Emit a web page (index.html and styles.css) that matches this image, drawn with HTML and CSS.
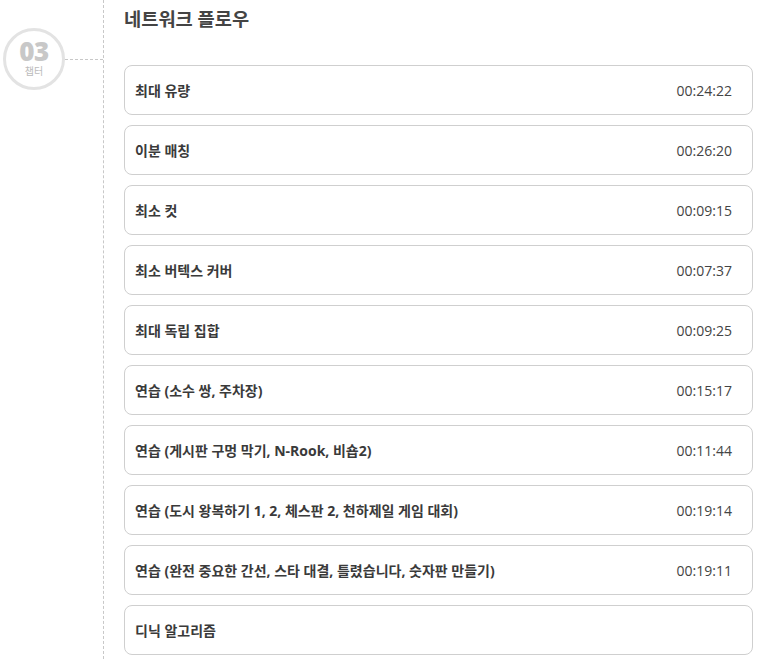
FILE: index.html
```html
<!DOCTYPE html>
<html lang="ko">
<head>
<meta charset="utf-8">
<link rel="stylesheet" href="styles.css">
</head>
<body>
<div class="page">
  <div class="side">
    <div class="badge">
      <div class="circle">
        <span class="num">03</span>
        <span class="lbl">챕터</span>
      </div>
      <div class="hline"></div>
    </div>
  </div>
  <div class="main">
    <h2 class="title">네트워크 플로우</h2>
    <ul class="list">
      <li class="item"><span class="name">최대 유량</span><span class="time">00:24:22</span></li>
      <li class="item"><span class="name">이분 매칭</span><span class="time">00:26:20</span></li>
      <li class="item"><span class="name">최소 컷</span><span class="time">00:09:15</span></li>
      <li class="item"><span class="name">최소 버텍스 커버</span><span class="time">00:07:37</span></li>
      <li class="item"><span class="name">최대 독립 집합</span><span class="time">00:09:25</span></li>
      <li class="item"><span class="name">연습 (소수 쌍, 주차장)</span><span class="time">00:15:17</span></li>
      <li class="item"><span class="name">연습 (게시판 구멍 막기, N-Rook, 비숍2)</span><span class="time">00:11:44</span></li>
      <li class="item"><span class="name">연습 (도시 왕복하기 1, 2, 체스판 2, 천하제일 게임 대회)</span><span class="time">00:19:14</span></li>
      <li class="item"><span class="name">연습 (완전 중요한 간선, 스타 대결, 틀렸습니다, 숫자판 만들기)</span><span class="time">00:19:11</span></li>
      <li class="item"><span class="name">디닉 알고리즘</span><span class="time"></span></li>
    </ul>
  </div>
</div>
</body>
</html>
```

FILE: styles.css
```css
* { box-sizing: border-box; }
html, body { margin: 0; padding: 0; background: #fff; }
body {
  font-family: "Open Sans", "Noto Sans CJK KR", sans-serif;
  color: #333;
  overflow: hidden;
}
.page {
  display: flex;
  height: 659px;
}
.side {
  width: 104px;
  flex: none;
  border-right: 1px dashed #c8c8c8;
  padding-top: 28px;
  padding-left: 3px;
}
.badge {
  display: flex;
  align-items: center;
}
.circle {
  width: 62px;
  height: 62px;
  border: 3px solid #e3e3e3;
  border-radius: 50%;
  display: flex;
  flex-direction: column;
  align-items: center;
  padding-top: 7px;
  flex: none;
}
.num {
  font-size: 26px;
  font-weight: 800;
  color: #c8c8c8;
  line-height: 26px;
  letter-spacing: -0.5px;
}
.lbl {
  font-size: 10px;
  color: #bbb;
  line-height: 12px;
  margin-top: 1px;
}
.hline {
  flex: 1;
  border-top: 1px dashed #c8c8c8;
}
.main {
  flex: 1;
  padding-left: 20px;
  padding-right: 6px;
}
.title {
  margin: 0;
  font-size: 18.7px;
  font-weight: 700;
  color: #444;
  line-height: 24px;
  padding-top: 7px;
  height: 65px;
}
.list {
  list-style: none;
  margin: 0;
  padding: 0;
  display: flex;
  flex-direction: column;
  gap: 10px;
}
.item {
  height: 50px;
  border: 1px solid #cfcfcf;
  border-radius: 8px;
  display: flex;
  align-items: center;
  justify-content: space-between;
  padding: 0 20px 0 10px;
}
.name {
  font-size: 14px;
  font-weight: 700;
  color: #3a3a3a;
}
.time {
  font-size: 14px;
  color: #444;
}
```
